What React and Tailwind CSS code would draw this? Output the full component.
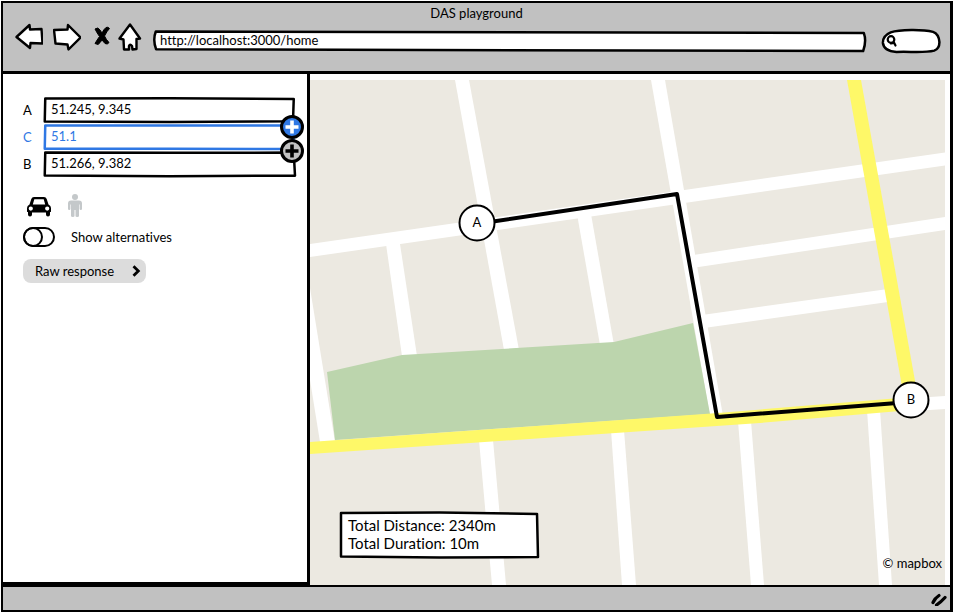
import { useState } from "react";

// Hand-drawn outline stretched behind a field or panel.
function SketchFrame({ d, fill = "white", className = "text-black" }) {
  return (
    <svg
      aria-hidden="true"
      viewBox="0 0 100 100"
      preserveAspectRatio="none"
      className={`pointer-events-none absolute inset-0 h-full w-full overflow-visible ${className}`}
    >
      <path d={d} fill={fill} stroke="currentColor" strokeWidth="2.500" strokeLinejoin="round" vectorEffect="non-scaling-stroke" />
    </svg>
  );
}

function ToolButton({ label, children, className }) {
  return (
    <button type="button" aria-label={label} className={`shrink-0 ${className}`}>
      {children}
    </button>
  );
}

function BrowserHeader() {
  return (
    <header className="h-[71px] border-b-[3px] border-black bg-[#c1c1c1]">
      <h1 className="h-5 text-center text-[13px] leading-5">DAS playground</h1>
      <div className="flex h-7 items-center pr-[10px] pl-3">
        <ToolButton label="Back" className="w-7">
          <svg viewBox="0 0 28 28" className="block h-7 w-7" fill="white" stroke="black" strokeWidth="2.400" strokeLinejoin="round">
            <path d="M1.500 14 14.500 2 15 6.500 26.500 6 27.500 20.500 15.500 20 15 25Z" />
          </svg>
        </ToolButton>
        <ToolButton label="Forward" className="ml-[10px] w-7">
          <svg viewBox="0 0 28 28" className="block h-7 w-7" fill="white" stroke="black" strokeWidth="2.400" strokeLinejoin="round">
            <path d="M1 7 14.500 6.500 15 2 27.500 14.500 15.500 26.500 14.500 21.500 2.500 20.500Z" />
          </svg>
        </ToolButton>
        <ToolButton label="Stop" className="mb-[3px] ml-[13px] w-4">
          <svg viewBox="0 0 16 20" className="block h-5 w-4" stroke="black" strokeWidth="1" strokeLinejoin="round">
            <path d="M1 3Q4 .5 6 4L8 7Q10 3 12 1.500 14 .5 15.500 2.500 13 5 10.500 10 12 13.500 15 16.500 13.500 19 11 17.500L8 14Q6 17 4 18.500L1 17.500Q3 14 5.500 10.500 3 7 1 3Z" />
          </svg>
        </ToolButton>
        <ToolButton label="Home" className="ml-2 w-6">
          <svg viewBox="0 0 24 28" className="block h-7 w-6" fill="white" stroke="black" strokeWidth="2.400" strokeLinejoin="round">
            <path d="M12 1.500 22 15.500 18.500 16 18.500 26 14.500 26.500 14 23Q12 20.500 11 23L11 26.500 6 26.500 5.500 16.500 1.500 15.500Z" />
          </svg>
        </ToolButton>
        <div className="relative mt-2 ml-3 h-[22px] flex-1">
          <SketchFrame d="M.25 7 99.700 14Q100.100 50 99.600 96L.3 88Q-.2 45 .25 7Z" />
          <input
            aria-label="Address"
            defaultValue="http://localhost:3000/home"
            className="relative block h-5 w-full bg-transparent px-[6px] text-[13px] leading-5 outline-none"
          />
        </div>
        <label className="relative mt-2 ml-4 flex h-6 w-[58px] items-center">
          <SketchFrame d="M15 14C30 2 70 1 88 12Q98 20 99 55 99 82 90 90C70 102 45 92 25 96Q3 92 1.500 58 1 28 15 14Z" />
          <svg viewBox="0 0 12 12" className="relative ml-1 h-3 w-3 shrink-0" fill="none" stroke="black" strokeWidth="2.200" strokeLinecap="round">
            <circle cx="5" cy="4.500" r="3.300" />
            <path d="M8 7.500 9.500 10.500M7.500 8 5 8.500" />
          </svg>
          <input aria-label="Search" className="relative h-5 w-9 min-w-0 bg-transparent text-[13px] outline-none" />
        </label>
      </div>
    </header>
  );
}

function Waypoint({ name, value, active = false, frame }) {
  return (
    <div className={`relative flex items-center ${active ? "text-[#2f78e4]" : "text-black"}`}>
      <label htmlFor={`point-${name}`} className="w-[21px] text-[13px] leading-5">
        {name}
      </label>
      <div className="relative h-[26px] flex-1">
        <SketchFrame d={frame} className={active ? "text-[#2f78e4]" : "text-black"} />
        <input
          id={`point-${name}`}
          defaultValue={value}
          className="relative block h-6 w-full bg-transparent px-[7px] text-[13px] leading-5 outline-none"
        />
      </div>
    </div>
  );
}

function AddButton({ label, className }) {
  return (
    <button type="button" aria-label={label} className={`absolute -right-[9px] h-6 w-6 rounded-full border-[3px] border-black ${className}`}>
      <svg viewBox="0 0 18 18" className="block h-[18px] w-[18px]" fill="none" stroke="currentColor" strokeWidth="3.600">
        <path d="M9 2.500V15.500M2.500 9H15.500" />
      </svg>
    </button>
  );
}

function Sidebar() {
  const [alternatives, setAlternatives] = useState(false);
  return (
    <aside className="w-[307px] shrink-0 border-r-[3px] border-b-[3px] border-black bg-white pt-[23px] pr-3 pl-5">
      <div className="relative flex flex-col gap-px">
        <Waypoint name="A" value="51.245, 9.345" frame="M.5 6 50 5 99.500 8 99.200 93 50 96 .3 94Z" />
        <Waypoint name="C" value="51.1" active frame="M.5 6 99.500 6 99.300 96 50 95 .3 95Z" />
        <Waypoint name="B" value="51.266, 9.382" frame="M.5 6 50 7 99.500 6 100 95 50 97 .3 94Z" />
        <AddButton label="Add point before C" className="top-[18px] bg-[#2f78e4] text-white" />
        <AddButton label="Add point after C" className="top-[42px] bg-[#c1c1c1] text-black" />
      </div>

      <div className="mt-4 flex items-center gap-[17px] pl-1">
        <button type="button" aria-label="Car" aria-pressed="true">
          <svg viewBox="0 0 24 24" className="block h-6 w-6">
            <path
              fillRule="evenodd"
              d="M7 4H17Q19 4 19.700 6L21.500 11.500Q24 12.500 24 15V18.500Q24 19 23 19V21.500Q23 23.500 21 23.500T19 21.500V19.500H5V21.500Q5 23.500 3 23.500T1 21.500V19Q0 19 0 18.500V15Q0 12.500 2.500 11.500L4.300 6Q5 4 7 4ZM7.300 6.300 5.800 11.500H18.200L16.700 6.300ZM3.800 13.500A2.100 2.100 0 1 0 3.800 17.700 2.100 2.100 0 1 0 3.800 13.500ZM20.200 13.500A2.100 2.100 0 1 0 20.200 17.700 2.100 2.100 0 1 0 20.200 13.500Z"
            />
          </svg>
        </button>
        <button type="button" aria-label="Walk" aria-pressed="false">
          <svg viewBox="0 0 14 24" className="block h-6 w-[14px]" fill="#c4c8ca">
            <circle cx="7" cy="4" r="3" />
            <path d="M3 7.500H11Q14 7.500 14 10.500V16Q14 17 12.800 17T11.600 16V11.500H11V23Q11 24 9.200 24T7.500 23V17H6.500V23Q6.500 24 4.800 24T3 23V11.500H2.400V16Q2.400 17 1.200 17T0 16V10.500Q0 7.500 3 7.500Z" />
          </svg>
        </button>
      </div>

      <label className="mt-[10px] flex cursor-pointer items-center gap-4 text-[13px] leading-5">
        <input
          type="checkbox"
          role="switch"
          checked={alternatives}
          onChange={(e) => setAlternatives(e.target.checked)}
          className="peer sr-only"
        />
        <span className="flex h-5 w-8 rounded-full border-2 border-black bg-white peer-checked:justify-end">
          <span className="-m-[2px] h-5 w-5 rounded-full border-2 border-black" />
        </span>
        Show alternatives
      </label>

      <button type="button" className="mt-3 flex h-6 w-[123px] items-center justify-between rounded-lg bg-[#dcdcdc] pr-[5px] pl-3 text-[13px] leading-5">
        Raw response
        <svg viewBox="0 0 9 12" className="h-3 w-[9px]" fill="none" stroke="black" strokeWidth="2.800">
          <path d="M1.500 1.300 6.300 6 1.500 10.700" />
        </svg>
      </button>
    </aside>
  );
}

function Marker({ x, y, children }) {
  return (
    <g>
      <circle cx={x} cy={y} r="17.500" fill="white" stroke="black" strokeWidth="2" />
      <text x={x} y={y + 4} textAnchor="middle" className="text-[13px]">
        {children}
      </text>
    </g>
  );
}

function MapView() {
  return (
    <main className="relative min-w-0 flex-1 bg-white pt-[6px] pr-[5px]">
      <div className="relative h-full overflow-hidden bg-[#ece9e1]">
        <svg
          role="img"
          aria-label="Route from A to B"
          viewBox="310 80 635 505"
          preserveAspectRatio="xMinYMin slice"
          className="absolute inset-0 h-full w-full"
        >
          <g fill="white">
            <path d="M455 80H469L519 350H504Z" />
            <path d="M651 80H665L723 416H710Z" />
            <path d="M310 244 945 152.500V165.500L310 257Z" />
            <path d="M690 255.500 945 217V230L692 268Z" />
            <path d="M702 315 888 289V302L704 328Z" />
            <path d="M310 288 335 442H320L310 380Z" />
            <path d="M386 244H400L417 356H402Z" />
            <path d="M577 214H591L614 345H600Z" />
            <path d="M479 440H493L506 585H492Z" />
            <path d="M611 430H624L636 585H622Z" />
            <path d="M738 421H751L764 585H751Z" />
            <path d="M867 410H880L892 585H879Z" />
            <path d="M900 399 945 396V409L900 412Z" />
          </g>
          <path fill="#bcd5ad" d="M327 372 402 355 614 342 693 323 710 414 335 440Z" />
          <g fill="#fef868">
            <path d="M310 442 620 420 718 413 900 398V411L760 423 630 432 310 454Z" />
            <path d="M847 80H861L917 392H903Z" />
          </g>
          <path d="M476 224 677 194 717 417 910 402" fill="none" stroke="black" strokeWidth="4" strokeLinejoin="round" />
          <Marker x={477} y={223}>A</Marker>
          <Marker x={911} y={400}>B</Marker>
        </svg>

        <div className="absolute bottom-[26px] left-[30px] w-[199px] px-2 pt-[5px] pb-[7px] text-[15px] leading-[18px]">
          <SketchFrame d="M.5 4 50 3 99 6 99.500 96 50 97 .5 95Z" />
          <p className="relative">Total Distance: 2340m</p>
          <p className="relative">Total Duration: 10m</p>
        </div>
        <p className="absolute right-[3px] bottom-3 text-[13px] leading-5">© mapbox</p>
      </div>
    </main>
  );
}

export default function App() {
  return (
    <div className="flex min-h-screen flex-col bg-white p-px font-['Lato','Noto_Sans',sans-serif] text-black [font-variant-ligatures:none]">
      <div className="flex flex-1 flex-col border-2 border-r-[3px] border-black">
        <BrowserHeader />
        <div className="flex flex-1">
          <Sidebar />
          <MapView />
        </div>
        <footer className="flex h-[25px] items-center justify-end border-t-2 border-black bg-[#c1c1c1] pr-[3px]">
          <svg aria-hidden="true" viewBox="0 0 16 14" className="h-[14px] w-4" fill="none" stroke="black" strokeWidth="3.200" strokeLinecap="round">
            <path d="M2 10.500Q4 6 8 3.500M5.500 13Q10 10 14 5.500" />
          </svg>
        </footer>
      </div>
    </div>
  );
}
